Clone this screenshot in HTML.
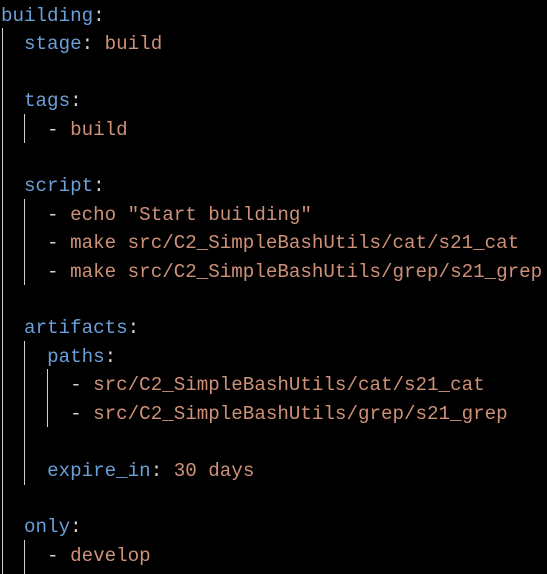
<!DOCTYPE html>
<html><head><meta charset="utf-8"><style>
html,body{margin:0;padding:0;background:#000;width:547px;height:574px;overflow:hidden}
pre{margin:0;position:absolute;left:1px;top:2px;font-family:"Liberation Mono",monospace;font-size:19.2px;line-height:28.4px;color:#d4d4d4}
.k{color:#6a9fd8}.v{color:#ce9178}
.g{position:absolute;width:1px;background:#cfcfcf}
</style></head><body>
<div class="g" style="left:2px;top:28px;height:546px"></div>
<div class="g" style="left:24px;top:114px;height:29px"></div>
<div class="g" style="left:24px;top:199px;height:86px"></div>
<div class="g" style="left:24px;top:341px;height:144px"></div>
<div class="g" style="left:47px;top:369px;height:58px"></div>
<div class="g" style="left:24px;top:540px;height:34px"></div>
<pre><span class="k">building</span>:
  <span class="k">stage</span>: <span class="v">build</span>

  <span class="k">tags</span>:
    - <span class="v">build</span>

  <span class="k">script</span>:
    - <span class="v">echo "Start building"</span>
    - <span class="v">make src/C2_SimpleBashUtils/cat/s21_cat</span>
    - <span class="v">make src/C2_SimpleBashUtils/grep/s21_grep</span>

  <span class="k">artifacts</span>:
    <span class="k">paths</span>:
      - <span class="v">src/C2_SimpleBashUtils/cat/s21_cat</span>
      - <span class="v">src/C2_SimpleBashUtils/grep/s21_grep</span>

    <span class="k">expire_in</span>: <span class="v">30 days</span>

  <span class="k">only</span>:
    - <span class="v">develop</span></pre>
</body></html>
